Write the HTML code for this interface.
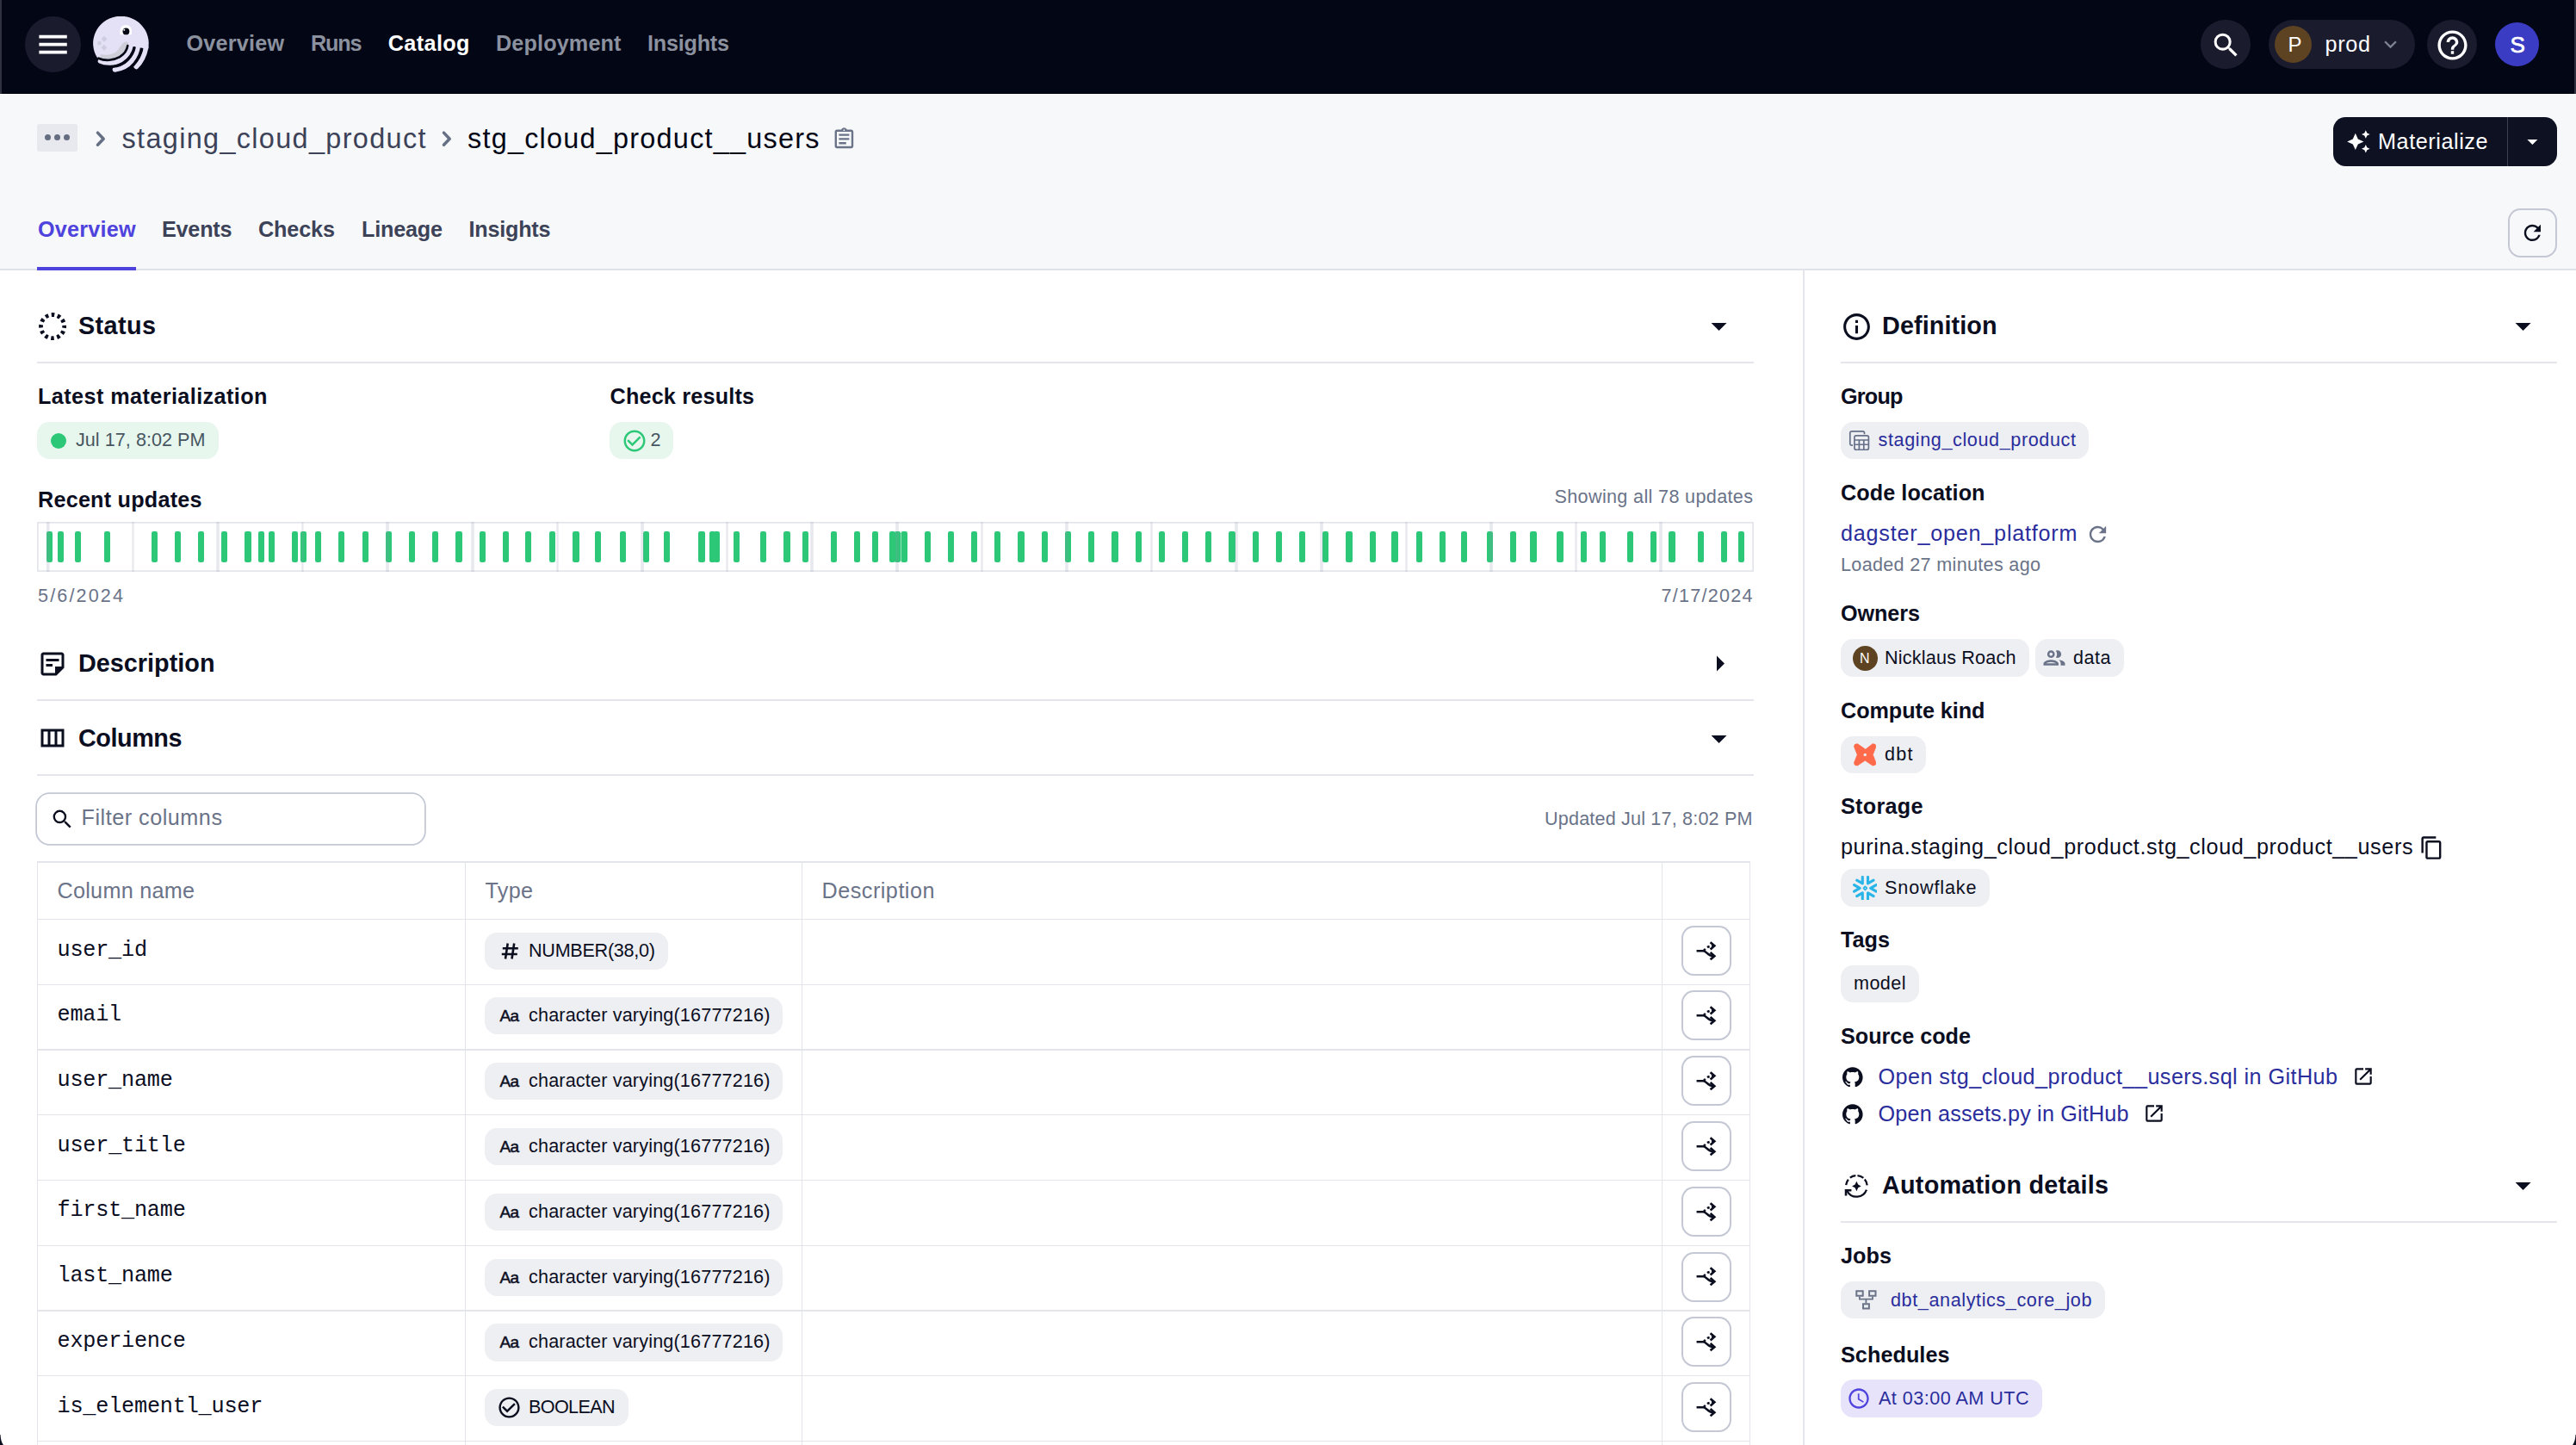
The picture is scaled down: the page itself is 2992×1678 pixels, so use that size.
<!DOCTYPE html><html lang="en"><head><meta charset="utf-8"><title>stg_cloud_product__users</title><style>html,body{margin:0;padding:0;overflow:hidden}body{width:2992px;height:1678px;background:#fff}#page{position:relative;width:2992px;height:1678px;overflow:hidden;transform-origin:0 0;background:#fff;font-family:"Liberation Sans",sans-serif}
.b{position:absolute;display:block}.t{position:absolute;white-space:nowrap;line-height:1;font-family:"Liberation Sans",sans-serif}
.m{font-family:"Liberation Mono",monospace}</style></head><body><div id="page">
<nav>
<div class="b" style="left:0px;top:0px;width:2992px;height:108.9px;background:#030615;"></div>
<div class="b" style="left:0px;top:0px;width:2px;height:108.9px;background:#2f3140;"></div>
<div class="b" style="left:2990px;top:0px;width:2px;height:108.9px;background:#2f3140;"></div>
<div class="b" style="left:29px;top:19px;width:65px;height:65px;background:#1a1c2e;border-radius:33px;"></div>
<svg class="b" style="left:39.9px;top:30.1px" width="43.2" height="43.2" viewBox="0 0 24 24"><path fill="#ffffff" d="M3 18h18v-2H3v2zm0-5h18v-2H3v2zm0-7v2h18V6H3z"/></svg>
<div class="b" style="left:2556px;top:23px;width:57.5px;height:57px;background:#1a1c2e;border-radius:29px;"></div>
<svg class="b" style="left:2567.0px;top:34.0px" width="37" height="37" viewBox="0 0 24 24"><path fill="#ffffff" d="M15.5 14h-.79l-.28-.27A6.471 6.471 0 0016 9.5 6.5 6.5 0 109.5 16c1.61 0 3.09-.59 4.23-1.57l.27.28v.79l5 4.99L20.49 19l-4.99-5zm-6 0C7.01 14 5 11.99 5 9.5S7.01 5 9.5 5 14 7.01 14 9.5 11.99 14 9.5 14z"/></svg>
<div class="b" style="left:2635px;top:23px;width:170px;height:57px;background:#1a1c2e;border-radius:29px;"></div>
<div class="b" style="left:2642px;top:30px;width:43px;height:43px;background:#5e4322;border-radius:22px;"></div>
<svg class="b" style="left:2761.5px;top:37.0px" width="29" height="29" viewBox="0 0 24 24"><path fill="#7d8392" d="M16.59 8.59L12 13.17 7.41 8.59 6 10l6 6 6-6z"/></svg>
<div class="b" style="left:2819px;top:23px;width:57.5px;height:57px;background:#1a1c2e;border-radius:29px;"></div>
<svg class="b" style="left:2827.5px;top:31.5px" width="41" height="41" viewBox="0 0 24 24"><path fill="#ffffff" d="M11 18h2v-2h-2v2zm1-16C6.48 2 2 6.48 2 12s4.48 10 10 10 10-4.48 10-10S17.52 2 12 2zm0 18c-4.41 0-8-3.59-8-8s3.59-8 8-8 8 3.59 8 8-3.59 8-8 8zm0-14c-2.21 0-4 1.79-4 4h2c0-1.1.9-2 2-2s2 .9 2 2c0 2-3 1.75-3 5h2c0-2.25 3-2.5 3-5 0-2.21-1.79-4-4-4z"/></svg>
<div class="b" style="left:2898px;top:26px;width:51px;height:51px;background:#3b3cc4;border-radius:26px;"></div>
<svg class="b" style="left:108px;top:19px" width="65" height="65" viewBox="0 0 65 65"><g fill="none" stroke="#e4e1f6" stroke-linecap="round"><path d="M8.5 52C15 55 25 54.800 32.500 50.500C38.500 47 42.500 42 44.300 33" stroke-width="5.600"/><path d="M25.500 61.800C33 61 40 57.500 44.500 52C48.500 47 51.500 42 52.300 34" stroke-width="5.800"/><path d="M50.300 58.300C55.500 53.500 59.500 46.500 61.600 36" stroke-width="5.800"/></g>
<path d="M5.200 48.350A32.300 31.600 0 1 1 64 38L40.300 34C39.500 39.500 36.500 44 31 47.500C24 51.500 14 52.500 6.500 49Z" fill="#e4e1f6"/>
<path d="M9 44C16 46 24.600 44 28 40C31.500 36 34 30.500 38 29.500C40 29 41.500 30.500 41 33.500L40.300 34C39.500 39.500 36.500 44 31 47.500C24 51.500 14 52.500 8 49.500Z" fill="#cdced8"/>
<g fill="none" stroke="#030615" stroke-width="2.600" stroke-linecap="round"><path d="M6.500 48.700C14 52.200 24 51.200 31 47.200C36.500 43.700 39.500 39.500 40.300 34"/><path d="M22 58.600C30 58.300 36 55 40.500 50.500C44.500 46.500 47.500 41.500 48.400 36.300"/><path d="M47.300 56.500C52 51 55.500 45 57 38"/></g>
<path d="M31.500 21.200V16.600A6.700 6.700 0 0 1 44.900 16.600V21.200Z" fill="#ffffff"/><circle cx="38.400" cy="17.400" r="3.900" fill="#030615"/><circle cx="36.300" cy="15.700" r="1" fill="#ffffff"/>
<g fill="#cfcde0"><rect x="10.400" y="23.700" width="5" height="5" transform="rotate(45 12.900 26.200)"/><rect x="5.300" y="29" width="4.300" height="4.300" rx="1"/><rect x="10.400" y="33.800" width="5" height="5" transform="rotate(45 12.900 36.300)"/></g></svg>
<span class="t" style="left:216.5px;top:38px;font-size:25.2px;color:#8b919e;font-weight:700;letter-spacing:0.212px;">Overview</span>
<span class="t" style="left:361px;top:38px;font-size:25.2px;color:#8b919e;font-weight:700;letter-spacing:-1.156px;">Runs</span>
<span class="t" style="left:450.75px;top:38px;font-size:25.2px;color:#ffffff;font-weight:700;letter-spacing:0.396px;">Catalog</span>
<span class="t" style="left:576px;top:38px;font-size:25.2px;color:#8b919e;font-weight:700;letter-spacing:0.149px;">Deployment</span>
<span class="t" style="left:752px;top:38px;font-size:25.2px;color:#8b919e;font-weight:700;letter-spacing:-0.223px;">Insights</span>
<span class="t" style="left:2657.5px;top:40px;font-size:24px;color:#ffffff;">P</span>
<span class="t" style="left:2700.5px;top:39px;font-size:25.2px;color:#ffffff;letter-spacing:0.693px;">prod</span>
<span class="t" style="left:2915.5px;top:39px;font-size:26px;color:#ffffff;-webkit-text-stroke:0.7px #ffffff;">S</span>
</nav>
<header>
<div class="b" style="left:0px;top:110.3px;width:2992px;height:202px;background:#f7f8fa;"></div>
<div class="b" style="left:0px;top:311.5px;width:2992px;height:2px;background:#e0e2e9;"></div>
<div class="b" style="left:43px;top:310px;width:115px;height:4px;background:#4f43dd;"></div>
<div class="b" style="left:43px;top:144px;width:46.9px;height:32px;background:#e8e9ee;border-radius:2.5px;"></div>
<div class="b" style="left:51.9px;top:156px;width:7.2px;height:7.2px;background:#656d80;border-radius:4px;"></div>
<div class="b" style="left:62.800000000000004px;top:156px;width:7.2px;height:7.2px;background:#656d80;border-radius:4px;"></div>
<div class="b" style="left:73.80000000000001px;top:156px;width:7.2px;height:7.2px;background:#656d80;border-radius:4px;"></div>
<svg class="b" style="left:108px;top:150px" width="16" height="22" viewBox="108 150 16 22"><path d="M113.450 154.150L120.200 161.200L113.450 168.250" fill="none" stroke="#667085" stroke-width="3.500" stroke-linecap="round" stroke-linejoin="round"/></svg>
<svg class="b" style="left:509.5px;top:150px" width="16" height="22" viewBox="108 150 16 22"><path d="M113.450 154.150L120.200 161.200L113.450 168.250" fill="none" stroke="#667085" stroke-width="3.500" stroke-linecap="round" stroke-linejoin="round"/></svg>
<svg class="b" style="left:966.1px;top:147.0px" width="28.8" height="28.8" viewBox="0 0 24 24"><path fill="#6a7388" d="M7 15h7v2H7zm0-4h10v2H7zm0-4h10v2H7zm12-4h-4.18C14.4 1.84 13.3 1 12 1c-1.3 0-2.4.84-2.82 2H5c-1.1 0-2 .9-2 2v14c0 1.1.9 2 2 2h14c1.1 0 2-.9 2-2V5c0-1.1-.9-2-2-2zm-7-.25c.41 0 .75.34.75.75s-.34.75-.75.75-.75-.34-.75-.75.34-.75.75-.75zM19 19H5V5h14v14z"/></svg>
<div class="b" style="left:2710px;top:136px;width:260px;height:57px;background:#0e1122;border-radius:14.4px;"></div>
<div class="b" style="left:2911.5px;top:136px;width:1.8px;height:57px;background:#3e4152;"></div>
<svg class="b" style="left:2725.1px;top:150.1px" width="28.8" height="28.8" viewBox="0 0 24 24"><path fill="#ffffff" d="M19 9l1.25-2.75L23 5l-2.75-1.25L19 1l-1.25 2.75L15 5l2.75 1.25L19 9zm-7.5.5L9 4 6.5 9.5 1 12l5.500 2.5L9 20l2.5-5.5L17 12l-5.5-2.500zM19 15l-1.25 2.75L15 19l2.75 1.250L19 23l1.25-2.75L23 19l-2.75-1.25L19 15z"/></svg>
<svg class="b" style="left:2927.1px;top:150.4px" width="28.8" height="28.8" viewBox="0 0 24 24"><path fill="#ffffff" d="M7 10l5 5 5-5z"/></svg>
<div class="b" style="left:2913px;top:242px;width:57px;height:57px;background:#f7f8fa;border-radius:14.4px;box-shadow:inset 0 0 0 2px #c4c8d4;"></div>
<svg class="b" style="left:2927.3px;top:256.1px" width="28.8" height="28.8" viewBox="0 0 24 24"><path fill="#0b0e1f" d="M17.65 6.35A7.958 7.958 0 0012 4c-4.42 0-7.99 3.58-7.99 8s3.57 8 7.99 8c3.73 0 6.84-2.55 7.73-6h-2.08A5.99 5.99 0 0112 18c-3.31 0-6-2.69-6-6s2.69-6 6-6c1.66 0 3.14.69 4.22 1.78L13 11h7V4l-2.35 2.35z"/></svg>
<span class="t" style="left:141.5px;top:145px;font-size:32.4px;color:#3c4257;letter-spacing:1.352px;">staging_cloud_product</span>
<span class="t" style="left:543px;top:145px;font-size:32.4px;color:#030615;letter-spacing:1.241px;">stg_cloud_product__users</span>
<span class="t" style="left:44px;top:254px;font-size:25.2px;color:#4f43dd;font-weight:700;letter-spacing:0.212px;">Overview</span>
<span class="t" style="left:188px;top:254px;font-size:25.2px;color:#3c4257;font-weight:700;letter-spacing:-0.222px;">Events</span>
<span class="t" style="left:300px;top:254px;font-size:25.2px;color:#3c4257;font-weight:700;letter-spacing:-0.122px;">Checks</span>
<span class="t" style="left:420px;top:254px;font-size:25.2px;color:#3c4257;font-weight:700;letter-spacing:-0.198px;">Lineage</span>
<span class="t" style="left:544.5px;top:254px;font-size:25.2px;color:#3c4257;font-weight:700;letter-spacing:-0.223px;">Insights</span>
<span class="t" style="left:2762px;top:152px;font-size:25.2px;color:#ffffff;letter-spacing:0.572px;">Materialize</span>
</header>
<main>
<div class="b" style="left:43px;top:420px;width:1994px;height:2px;background:#e4e6ec;"></div>
<div class="b" style="left:43px;top:812px;width:1994px;height:2px;background:#e4e6ec;"></div>
<div class="b" style="left:43px;top:899px;width:1994px;height:2px;background:#e4e6ec;"></div>
<svg class="b" style="left:44.9px;top:362.8px" width="32.2" height="32.2" viewBox="0 0 32.2 32.2"><circle cx="16.100" cy="16.100" r="13.600" fill="none" stroke="#0b0e1f" stroke-width="4.800" stroke-dasharray="3.600 3.521" stroke-dashoffset="1.800"/></svg>
<svg class="b" style="left:1975.4px;top:357.4px" width="43.2" height="43.2" viewBox="0 0 24 24"><path fill="#0b0e1f" d="M7 10l5 5 5-5z"/></svg>
<svg class="b" style="left:1975.9px;top:749.4px" width="43.2" height="43.2" viewBox="0 0 24 24"><path fill="#0b0e1f" d="M10 17l5-5-5-5v10z"/></svg>
<svg class="b" style="left:1975.4px;top:835.9px" width="43.2" height="43.2" viewBox="0 0 24 24"><path fill="#0b0e1f" d="M7 10l5 5 5-5z"/></svg>
<svg class="b" style="left:43.0px;top:752.75px" width="36" height="36" viewBox="0 0 24 24"><path fill="#0b0e1f" d="M19 5v9h-5v5H5V5h14m0-2H5c-1.1 0-2 .9-2 2v14c0 1.1.9 2 2 2h10l6-6V5c0-1.1-.9-2-2-2zm-7 11H7v-2h5v2zm5-4H7V8h10v2z"/></svg>
<svg class="b" style="left:43.0px;top:839.0px" width="36" height="36" viewBox="0 0 24 24"><path fill="#0b0e1f" d="M3 5v14h18V5H3zm5.33 12H5V7h3.33v10zm5.34 0h-3.33V7h3.33v10zM19 17h-3.33V7H19v10z"/></svg>
<div class="b" style="left:43px;top:490px;width:211px;height:43px;background:#e7f7ee;border-radius:14.4px;"></div>
<div class="b" style="left:59px;top:503px;width:18px;height:18px;background:#2cc878;border-radius:9px;"></div>
<div class="b" style="left:708px;top:490px;width:74px;height:43px;background:#e7f7ee;border-radius:14.4px;"></div>
<svg class="b" style="left:721.5px;top:496.5px" width="30" height="30" viewBox="0 0 24 24"><path fill="#2cc878" d="M16.59 7.58L10 14.17l-3.59-3.58L5 12l5 5 8-8zM12 2C6.48 2 2 6.48 2 12s4.48 10 10 10 10-4.48 10-10S17.52 2 12 2zm0 18c-4.42 0-8-3.58-8-8s3.58-8 8-8 8 3.58 8 8-3.58 8-8 8z"/></svg>
<div class="b" style="left:43px;top:606px;width:1994px;height:58px;box-shadow:inset 0 0 0 1.8px #e4e6ec;"></div>
<svg class="b" style="left:43px;top:606px" width="1994" height="58" viewBox="0 0 1994 58"><g fill="#2cc878"><rect x="11" y="11" width="7" height="36" rx="2.2"/><rect x="24" y="11" width="7" height="36" rx="2.2"/><rect x="44" y="11" width="7" height="36" rx="2.2"/><rect x="78" y="11" width="7" height="36" rx="2.2"/><rect x="133" y="11" width="7" height="36" rx="2.2"/><rect x="160" y="11" width="7" height="36" rx="2.2"/><rect x="187" y="11" width="7" height="36" rx="2.2"/><rect x="214" y="11" width="7" height="36" rx="2.2"/><rect x="241" y="11" width="8" height="36" rx="2.2"/><rect x="257" y="11" width="7" height="36" rx="2.2"/><rect x="269" y="11" width="7" height="36" rx="2.2"/><rect x="296" y="11" width="7" height="36" rx="2.2"/><rect x="306" y="11" width="7" height="36" rx="2.2"/><rect x="323" y="11" width="7" height="36" rx="2.2"/><rect x="350" y="11" width="7" height="36" rx="2.2"/><rect x="378" y="11" width="7" height="36" rx="2.2"/><rect x="405" y="11" width="7" height="36" rx="2.2"/><rect x="432" y="11" width="7" height="36" rx="2.2"/><rect x="459" y="11" width="7" height="36" rx="2.2"/><rect x="486" y="11" width="8" height="36" rx="2.2"/><rect x="514" y="11" width="7" height="36" rx="2.2"/><rect x="541" y="11" width="7" height="36" rx="2.2"/><rect x="567" y="11" width="7" height="36" rx="2.2"/><rect x="595" y="11" width="7" height="36" rx="2.2"/><rect x="622" y="11" width="8" height="36" rx="2.2"/><rect x="648" y="11" width="7" height="36" rx="2.2"/><rect x="677" y="11" width="7" height="36" rx="2.2"/><rect x="704" y="11" width="7" height="36" rx="2.2"/><rect x="728" y="11" width="7" height="36" rx="2.2"/><rect x="768" y="11" width="8" height="36" rx="2.2"/><rect x="781" y="11" width="7" height="36" rx="2.2"/><rect x="786" y="11" width="7" height="36" rx="2.2"/><rect x="809" y="11" width="7" height="36" rx="2.2"/><rect x="840" y="11" width="7" height="36" rx="2.2"/><rect x="867" y="11" width="8" height="36" rx="2.2"/><rect x="889" y="11" width="7" height="36" rx="2.2"/><rect x="922" y="11" width="7" height="36" rx="2.2"/><rect x="949" y="11" width="7" height="36" rx="2.2"/><rect x="970" y="11" width="7" height="36" rx="2.2"/><rect x="990" y="11" width="7" height="36" rx="2.2"/><rect x="996" y="11" width="7" height="36" rx="2.2"/><rect x="1003.5" y="11" width="7.5" height="36" rx="2.2"/><rect x="1031" y="11" width="7" height="36" rx="2.2"/><rect x="1058" y="11" width="7" height="36" rx="2.2"/><rect x="1085" y="11" width="7" height="36" rx="2.2"/><rect x="1112" y="11" width="7" height="36" rx="2.2"/><rect x="1139" y="11" width="8" height="36" rx="2.2"/><rect x="1167" y="11" width="7" height="36" rx="2.2"/><rect x="1194" y="11" width="7" height="36" rx="2.2"/><rect x="1221" y="11" width="7" height="36" rx="2.2"/><rect x="1248" y="11" width="8" height="36" rx="2.2"/><rect x="1276" y="11" width="7" height="36" rx="2.2"/><rect x="1303" y="11" width="7" height="36" rx="2.2"/><rect x="1330" y="11" width="7" height="36" rx="2.2"/><rect x="1357" y="11" width="7" height="36" rx="2.2"/><rect x="1384" y="11" width="8" height="36" rx="2.2"/><rect x="1412" y="11" width="7" height="36" rx="2.2"/><rect x="1439" y="11" width="7" height="36" rx="2.2"/><rect x="1466" y="11" width="7" height="36" rx="2.2"/><rect x="1493" y="11" width="7" height="36" rx="2.2"/><rect x="1520" y="11" width="8" height="36" rx="2.2"/><rect x="1548" y="11" width="7" height="36" rx="2.2"/><rect x="1573" y="11" width="8" height="36" rx="2.2"/><rect x="1602" y="11" width="7" height="36" rx="2.2"/><rect x="1629" y="11" width="7" height="36" rx="2.2"/><rect x="1654" y="11" width="7" height="36" rx="2.2"/><rect x="1684" y="11" width="7" height="36" rx="2.2"/><rect x="1711" y="11" width="7" height="36" rx="2.2"/><rect x="1734" y="11" width="8" height="36" rx="2.2"/><rect x="1765" y="11" width="8" height="36" rx="2.2"/><rect x="1793" y="11" width="7" height="36" rx="2.2"/><rect x="1815" y="11" width="7" height="36" rx="2.2"/><rect x="1847" y="11" width="7" height="36" rx="2.2"/><rect x="1874" y="11" width="7" height="36" rx="2.2"/><rect x="1895" y="11" width="8" height="36" rx="2.2"/><rect x="1929" y="11" width="7" height="36" rx="2.2"/><rect x="1956" y="11" width="7" height="36" rx="2.2"/><rect x="1976" y="11" width="7" height="36" rx="2.2"/></g><g fill="#9196ae" fill-opacity="0.21"><rect x="10.95" y="0" width="3.6" height="58"/><rect x="110.35" y="0" width="2.3" height="58"/><rect x="208.2" y="0" width="3.6" height="58"/><rect x="307.25" y="0" width="2.3" height="58"/><rect x="405.2" y="0" width="3.6" height="58"/><rect x="504.2" y="0" width="3.6" height="58"/><rect x="603.35" y="0" width="2.3" height="58"/><rect x="701.2" y="0" width="3.6" height="58"/><rect x="800.35" y="0" width="2.3" height="58"/><rect x="898.2" y="0" width="3.6" height="58"/><rect x="997.2" y="0" width="3.6" height="58"/><rect x="1096.35" y="0" width="2.3" height="58"/><rect x="1194.2" y="0" width="3.6" height="58"/><rect x="1293.35" y="0" width="2.3" height="58"/><rect x="1391.2" y="0" width="3.6" height="58"/><rect x="1490.2" y="0" width="3.6" height="58"/><rect x="1589.35" y="0" width="2.3" height="58"/><rect x="1687.2" y="0" width="3.6" height="58"/><rect x="1786.35" y="0" width="2.3" height="58"/><rect x="1884.2" y="0" width="3.6" height="58"/></g></svg>
<div class="b" style="left:43.2px;top:922.3px;width:450px;height:57.6px;background:#fff;border-radius:14.4px;box-shadow:0 0 0 1.8px #c4c8d4;"></div>
<svg class="b" style="left:57.9px;top:937.4px" width="28.8" height="28.8" viewBox="0 0 24 24"><path fill="#0b0e1f" d="M15.5 14h-.79l-.28-.27A6.471 6.471 0 0016 9.5 6.5 6.5 0 109.5 16c1.61 0 3.09-.59 4.23-1.57l.27.28v.79l5 4.99L20.49 19l-4.99-5zm-6 0C7.01 14 5 11.99 5 9.5S7.01 5 9.5 5 14 7.01 14 9.5 11.99 14 9.5 14z"/></svg>
<div class="b" style="left:43px;top:1000.4px;width:1990px;height:1.3px;background:#e3e5eb;"></div>
<div class="b" style="left:43px;top:1066.95px;width:1990px;height:1.3px;background:#e3e5eb;"></div>
<div class="b" style="left:43px;top:1142.7px;width:1990px;height:1.3px;background:#e3e5eb;"></div>
<div class="b" style="left:43px;top:1218.45px;width:1990px;height:1.3px;background:#e3e5eb;"></div>
<div class="b" style="left:43px;top:1294.2px;width:1990px;height:1.3px;background:#e3e5eb;"></div>
<div class="b" style="left:43px;top:1369.95px;width:1990px;height:1.3px;background:#e3e5eb;"></div>
<div class="b" style="left:43px;top:1445.7px;width:1990px;height:1.3px;background:#e3e5eb;"></div>
<div class="b" style="left:43px;top:1521.45px;width:1990px;height:1.3px;background:#e3e5eb;"></div>
<div class="b" style="left:43px;top:1597.2px;width:1990px;height:1.3px;background:#e3e5eb;"></div>
<div class="b" style="left:43px;top:1672.95px;width:1990px;height:1.3px;background:#e3e5eb;"></div>
<div class="b" style="left:43.1px;top:1000.4px;width:1.3px;height:677.6px;background:#e3e5eb;"></div>
<div class="b" style="left:539.85px;top:1000.4px;width:1.3px;height:677.6px;background:#e3e5eb;"></div>
<div class="b" style="left:930.6px;top:1000.4px;width:1.3px;height:677.6px;background:#e3e5eb;"></div>
<div class="b" style="left:1929.85px;top:1000.4px;width:1.3px;height:677.6px;background:#e3e5eb;"></div>
<div class="b" style="left:2031.75px;top:1000.4px;width:1.3px;height:677.6px;background:#e3e5eb;"></div>
<div class="b" style="left:563px;top:1083px;width:213px;height:43.2px;background:#eeeff2;border-radius:14.4px;"></div>
<svg class="b" style="left:580px;top:1093px" width="24" height="24" viewBox="0 0 24 24"><path d="M9.700 2.500L7 20.500M17.200 2.500L14.500 20.500M3.800 8.300h18M2.800 15h18" fill="none" stroke="#0b0e1f" stroke-width="2.600"/></svg>
<div class="b" style="left:1953px;top:1075px;width:58px;height:58px;background:#fff;border-radius:14.4px;box-shadow:inset 0 0 0 2px #c4c8d4;"></div>
<svg class="b" style="left:1967px;top:1089.6px" width="28.5" height="28.5" viewBox="0 0 24 24"><path d="M3 12h6.5c3.500 0 4 5 10 5" fill="none" stroke="#0b0e1f" stroke-width="2.2"/>
<path d="M16.500 13.500l4 3.500-4 3.500" fill="none" stroke="#0b0e1f" stroke-width="2.200"/>
<path d="M10 11.500c2-1 3-4.500 9.500-4.500" fill="none" stroke="#0b0e1f" stroke-width="2.200" stroke-dasharray="2.400 2.200"/>
<path d="M16.500 3.500l4 3.500-4 3.500" fill="none" stroke="#0b0e1f" stroke-width="2.200"/></svg>
<div class="b" style="left:563px;top:1158.2px;width:346px;height:43.2px;background:#eeeff2;border-radius:14.4px;"></div>
<div class="b" style="left:1953px;top:1150.2px;width:58px;height:58px;background:#fff;border-radius:14.4px;box-shadow:inset 0 0 0 2px #c4c8d4;"></div>
<svg class="b" style="left:1967px;top:1164.8px" width="28.5" height="28.5" viewBox="0 0 24 24"><path d="M3 12h6.5c3.500 0 4 5 10 5" fill="none" stroke="#0b0e1f" stroke-width="2.2"/>
<path d="M16.500 13.500l4 3.500-4 3.500" fill="none" stroke="#0b0e1f" stroke-width="2.200"/>
<path d="M10 11.500c2-1 3-4.500 9.500-4.500" fill="none" stroke="#0b0e1f" stroke-width="2.200" stroke-dasharray="2.400 2.200"/>
<path d="M16.500 3.500l4 3.500-4 3.500" fill="none" stroke="#0b0e1f" stroke-width="2.200"/></svg>
<div class="b" style="left:563px;top:1234px;width:346px;height:43.2px;background:#eeeff2;border-radius:14.4px;"></div>
<div class="b" style="left:1953px;top:1226px;width:58px;height:58px;background:#fff;border-radius:14.4px;box-shadow:inset 0 0 0 2px #c4c8d4;"></div>
<svg class="b" style="left:1967px;top:1240.6px" width="28.5" height="28.5" viewBox="0 0 24 24"><path d="M3 12h6.5c3.500 0 4 5 10 5" fill="none" stroke="#0b0e1f" stroke-width="2.2"/>
<path d="M16.500 13.500l4 3.500-4 3.500" fill="none" stroke="#0b0e1f" stroke-width="2.200"/>
<path d="M10 11.500c2-1 3-4.500 9.500-4.500" fill="none" stroke="#0b0e1f" stroke-width="2.200" stroke-dasharray="2.400 2.200"/>
<path d="M16.500 3.500l4 3.500-4 3.500" fill="none" stroke="#0b0e1f" stroke-width="2.200"/></svg>
<div class="b" style="left:563px;top:1310px;width:346px;height:43.2px;background:#eeeff2;border-radius:14.4px;"></div>
<div class="b" style="left:1953px;top:1302px;width:58px;height:58px;background:#fff;border-radius:14.4px;box-shadow:inset 0 0 0 2px #c4c8d4;"></div>
<svg class="b" style="left:1967px;top:1316.6px" width="28.5" height="28.5" viewBox="0 0 24 24"><path d="M3 12h6.5c3.500 0 4 5 10 5" fill="none" stroke="#0b0e1f" stroke-width="2.2"/>
<path d="M16.500 13.500l4 3.500-4 3.500" fill="none" stroke="#0b0e1f" stroke-width="2.200"/>
<path d="M10 11.500c2-1 3-4.500 9.500-4.500" fill="none" stroke="#0b0e1f" stroke-width="2.200" stroke-dasharray="2.400 2.200"/>
<path d="M16.500 3.500l4 3.500-4 3.500" fill="none" stroke="#0b0e1f" stroke-width="2.200"/></svg>
<div class="b" style="left:563px;top:1386px;width:346px;height:43.2px;background:#eeeff2;border-radius:14.4px;"></div>
<div class="b" style="left:1953px;top:1378px;width:58px;height:58px;background:#fff;border-radius:14.4px;box-shadow:inset 0 0 0 2px #c4c8d4;"></div>
<svg class="b" style="left:1967px;top:1392.6px" width="28.5" height="28.5" viewBox="0 0 24 24"><path d="M3 12h6.5c3.500 0 4 5 10 5" fill="none" stroke="#0b0e1f" stroke-width="2.2"/>
<path d="M16.500 13.500l4 3.500-4 3.500" fill="none" stroke="#0b0e1f" stroke-width="2.200"/>
<path d="M10 11.500c2-1 3-4.500 9.500-4.500" fill="none" stroke="#0b0e1f" stroke-width="2.200" stroke-dasharray="2.400 2.200"/>
<path d="M16.500 3.500l4 3.500-4 3.500" fill="none" stroke="#0b0e1f" stroke-width="2.200"/></svg>
<div class="b" style="left:563px;top:1461.7px;width:346px;height:43.2px;background:#eeeff2;border-radius:14.4px;"></div>
<div class="b" style="left:1953px;top:1453.7px;width:58px;height:58px;background:#fff;border-radius:14.4px;box-shadow:inset 0 0 0 2px #c4c8d4;"></div>
<svg class="b" style="left:1967px;top:1468.3px" width="28.5" height="28.5" viewBox="0 0 24 24"><path d="M3 12h6.5c3.500 0 4 5 10 5" fill="none" stroke="#0b0e1f" stroke-width="2.2"/>
<path d="M16.500 13.500l4 3.500-4 3.500" fill="none" stroke="#0b0e1f" stroke-width="2.200"/>
<path d="M10 11.500c2-1 3-4.500 9.500-4.500" fill="none" stroke="#0b0e1f" stroke-width="2.200" stroke-dasharray="2.400 2.200"/>
<path d="M16.500 3.500l4 3.500-4 3.500" fill="none" stroke="#0b0e1f" stroke-width="2.200"/></svg>
<div class="b" style="left:563px;top:1537.4px;width:346px;height:43.2px;background:#eeeff2;border-radius:14.4px;"></div>
<div class="b" style="left:1953px;top:1529.4px;width:58px;height:58px;background:#fff;border-radius:14.4px;box-shadow:inset 0 0 0 2px #c4c8d4;"></div>
<svg class="b" style="left:1967px;top:1544.0px" width="28.5" height="28.5" viewBox="0 0 24 24"><path d="M3 12h6.5c3.500 0 4 5 10 5" fill="none" stroke="#0b0e1f" stroke-width="2.2"/>
<path d="M16.500 13.500l4 3.500-4 3.500" fill="none" stroke="#0b0e1f" stroke-width="2.200"/>
<path d="M10 11.500c2-1 3-4.500 9.500-4.500" fill="none" stroke="#0b0e1f" stroke-width="2.200" stroke-dasharray="2.400 2.200"/>
<path d="M16.500 3.500l4 3.500-4 3.500" fill="none" stroke="#0b0e1f" stroke-width="2.200"/></svg>
<div class="b" style="left:563px;top:1613px;width:167px;height:43.2px;background:#eeeff2;border-radius:14.4px;"></div>
<svg class="b" style="left:577.0px;top:1620.1px" width="29" height="29" viewBox="0 0 24 24"><path fill="#0b0e1f" d="M16.59 7.58L10 14.17l-3.59-3.58L5 12l5 5 8-8zM12 2C6.48 2 2 6.48 2 12s4.48 10 10 10 10-4.48 10-10S17.52 2 12 2zm0 18c-4.42 0-8-3.58-8-8s3.58-8 8-8 8 3.58 8 8-3.58 8-8 8z"/></svg>
<div class="b" style="left:1953px;top:1605px;width:58px;height:58px;background:#fff;border-radius:14.4px;box-shadow:inset 0 0 0 2px #c4c8d4;"></div>
<svg class="b" style="left:1967px;top:1619.6px" width="28.5" height="28.5" viewBox="0 0 24 24"><path d="M3 12h6.5c3.500 0 4 5 10 5" fill="none" stroke="#0b0e1f" stroke-width="2.2"/>
<path d="M16.500 13.500l4 3.500-4 3.500" fill="none" stroke="#0b0e1f" stroke-width="2.200"/>
<path d="M10 11.500c2-1 3-4.500 9.500-4.500" fill="none" stroke="#0b0e1f" stroke-width="2.200" stroke-dasharray="2.400 2.200"/>
<path d="M16.500 3.500l4 3.500-4 3.500" fill="none" stroke="#0b0e1f" stroke-width="2.200"/></svg>
<svg class="b" style="left:0px;top:1665.5px" width="5" height="12.5" viewBox="0 0 5 12.5"><path d="M0 0H0.500C0.800 6 2 9.500 4.300 12.500H0z" fill="#0b0e1f"/></svg>
<span class="t" style="left:91px;top:364px;font-size:28.8px;color:#0b0e1f;font-weight:700;letter-spacing:0.397px;">Status</span>
<span class="t" style="left:91px;top:756px;font-size:28.8px;color:#0b0e1f;font-weight:700;letter-spacing:0.008px;">Description</span>
<span class="t" style="left:91px;top:843px;font-size:28.8px;color:#0b0e1f;font-weight:700;letter-spacing:-0.451px;">Columns</span>
<span class="t" style="left:44px;top:448px;font-size:25.2px;color:#0b0e1f;font-weight:700;letter-spacing:0.426px;">Latest materialization</span>
<span class="t" style="left:708.5px;top:448px;font-size:25.2px;color:#0b0e1f;font-weight:700;letter-spacing:0.191px;">Check results</span>
<span class="t" style="left:44px;top:568px;font-size:25.2px;color:#0b0e1f;font-weight:700;letter-spacing:0.226px;">Recent updates</span>
<span class="t" style="left:88px;top:500px;font-size:21.6px;color:#475661;letter-spacing:0.032px;">Jul 17, 8:02 PM</span>
<span class="t" style="left:755.5px;top:500px;font-size:21.6px;color:#475661;">2</span>
<span class="t" style="left:1805.5px;top:566px;font-size:21.6px;color:#6a7388;letter-spacing:0.342px;">Showing all 78 updates</span>
<span class="t" style="left:44px;top:681px;font-size:21.6px;color:#6a7388;letter-spacing:2.134px;">5/6/2024</span>
<span class="t" style="left:1929.5px;top:681px;font-size:21.6px;color:#6a7388;letter-spacing:1.24px;">7/17/2024</span>
<span class="t" style="left:1794px;top:940px;font-size:21.6px;color:#6a7388;letter-spacing:0.173px;">Updated Jul 17, 8:02 PM</span>
<span class="t" style="left:94.5px;top:937px;font-size:25.2px;color:#6a7388;letter-spacing:0.518px;">Filter columns</span>
<span class="t" style="left:66.5px;top:1022px;font-size:25.2px;color:#6a7388;letter-spacing:0.27px;">Column name</span>
<span class="t" style="left:563.5px;top:1022px;font-size:25.2px;color:#6a7388;letter-spacing:0.297px;">Type</span>
<span class="t" style="left:954.5px;top:1022px;font-size:25.2px;color:#6a7388;letter-spacing:0.5px;">Description</span>
<span class="t m" style="left:66.5px;top:1091px;font-size:25.2px;color:#0b0e1f;letter-spacing:-0.217px;">user_id</span>
<span class="t" style="left:614px;top:1093px;font-size:21.6px;color:#0b0e1f;letter-spacing:-0.273px;">NUMBER(38,0)</span>
<span class="t m" style="left:66.5px;top:1166px;font-size:25.2px;color:#0b0e1f;letter-spacing:-0.232px;">email</span>
<span class="t" style="left:614px;top:1168px;font-size:21.6px;color:#0b0e1f;letter-spacing:0.169px;">character varying(16777216)</span>
<span class="t" style="left:580.5px;top:1170px;font-size:19px;color:#0b0e1f;-webkit-text-stroke:0.5px #0b0e1f;letter-spacing:-0.75px;">Aa</span>
<span class="t m" style="left:66.5px;top:1242px;font-size:25.2px;color:#0b0e1f;letter-spacing:-0.21px;">user_name</span>
<span class="t" style="left:614px;top:1244px;font-size:21.6px;color:#0b0e1f;letter-spacing:0.169px;">character varying(16777216)</span>
<span class="t" style="left:580.5px;top:1246px;font-size:19px;color:#0b0e1f;-webkit-text-stroke:0.5px #0b0e1f;letter-spacing:-0.75px;">Aa</span>
<span class="t m" style="left:66.5px;top:1318px;font-size:25.2px;color:#0b0e1f;letter-spacing:-0.206px;">user_title</span>
<span class="t" style="left:614px;top:1320px;font-size:21.6px;color:#0b0e1f;letter-spacing:0.169px;">character varying(16777216)</span>
<span class="t" style="left:580.5px;top:1322px;font-size:19px;color:#0b0e1f;-webkit-text-stroke:0.5px #0b0e1f;letter-spacing:-0.75px;">Aa</span>
<span class="t m" style="left:66.5px;top:1393px;font-size:25.2px;color:#0b0e1f;letter-spacing:-0.206px;">first_name</span>
<span class="t" style="left:614px;top:1396px;font-size:21.6px;color:#0b0e1f;letter-spacing:0.169px;">character varying(16777216)</span>
<span class="t" style="left:580.5px;top:1398px;font-size:19px;color:#0b0e1f;-webkit-text-stroke:0.5px #0b0e1f;letter-spacing:-0.75px;">Aa</span>
<span class="t m" style="left:66.5px;top:1469px;font-size:25.2px;color:#0b0e1f;letter-spacing:-0.21px;">last_name</span>
<span class="t" style="left:614px;top:1472px;font-size:21.6px;color:#0b0e1f;letter-spacing:0.169px;">character varying(16777216)</span>
<span class="t" style="left:580.5px;top:1474px;font-size:19px;color:#0b0e1f;-webkit-text-stroke:0.5px #0b0e1f;letter-spacing:-0.75px;">Aa</span>
<span class="t m" style="left:66.5px;top:1545px;font-size:25.2px;color:#0b0e1f;letter-spacing:-0.206px;">experience</span>
<span class="t" style="left:614px;top:1547px;font-size:21.6px;color:#0b0e1f;letter-spacing:0.169px;">character varying(16777216)</span>
<span class="t" style="left:580.5px;top:1549px;font-size:19px;color:#0b0e1f;-webkit-text-stroke:0.5px #0b0e1f;letter-spacing:-0.75px;">Aa</span>
<span class="t m" style="left:66.5px;top:1621px;font-size:25.2px;color:#0b0e1f;letter-spacing:-0.198px;">is_elementl_user</span>
<span class="t" style="left:614px;top:1623px;font-size:21.6px;color:#0b0e1f;letter-spacing:-0.651px;">BOOLEAN</span>
</main>
<aside>
<div class="b" style="left:2094px;top:313px;width:2px;height:1365px;background:#e4e6ec;"></div>
<div class="b" style="left:2138px;top:420px;width:832px;height:2px;background:#e4e6ec;"></div>
<div class="b" style="left:2138px;top:1418px;width:832px;height:2px;background:#e4e6ec;"></div>
<svg class="b" style="left:2909.4px;top:357.4px" width="43.2" height="43.2" viewBox="0 0 24 24"><path fill="#0b0e1f" d="M7 10l5 5 5-5z"/></svg>
<svg class="b" style="left:2909.4px;top:1355.4px" width="43.2" height="43.2" viewBox="0 0 24 24"><path fill="#0b0e1f" d="M7 10l5 5 5-5z"/></svg>
<svg class="b" style="left:2137.5px;top:360.5px" width="37" height="37" viewBox="0 0 24 24"><path fill="#0b0e1f" d="M11 7h2v2h-2zm0 4h2v6h-2zm1-9C6.48 2 2 6.48 2 12s4.48 10 10 10 10-4.48 10-10S17.52 2 12 2zm0 18c-4.41 0-8-3.59-8-8s3.59-8 8-8 8 3.59 8 8-3.59 8-8 8z"/></svg>
<svg class="b" style="left:2141.55px;top:1362.7px" width="28.8" height="28.8" viewBox="0 0 24 24"><path d="M1.81 10.93A10.25 10.25 0 0 1 4.03 5.55 M5.69 3.92A10.25 10.25 0 0 1 11.11 1.79 M12.89 1.79A10.25 10.25 0 0 1 18.59 4.15 M19.85 5.41A10.25 10.25 0 0 1 22.21 11.11" fill="none" stroke="#0b0e1f" stroke-width="1.900"/><path d="M21.63 15.51A10.25 10.25 0 0 1 2.95 16.81L2.300 16.700" fill="none" stroke="#0b0e1f" stroke-width="1.900"/><path d="M1.700 21.200V16.100H7" fill="none" stroke="#0b0e1f" stroke-width="2.160"/><path d="M12 7.200L13.500 10.500L16.400 12L13.500 13.500L12 16.800L10.500 13.500L7.600 12L10.500 10.500Z" fill="#0b0e1f"/></svg>
<div class="b" style="left:2138px;top:490px;width:288px;height:43px;background:#eeeff2;border-radius:14.4px;"></div>
<svg class="b" style="left:2146px;top:498px" width="28" height="28" viewBox="0 0 28 28"><g fill="none" stroke="#667089" stroke-width="1.700"><path d="M6 19.200H4.800a2 2 0 0 1-2-2V4.800a2 2 0 0 1 2-2H17.500a2 2 0 0 1 2 2V6.200"/><rect x="7.950" y="7.850" width="16.450" height="16.400" rx="2"/><path d="M7.950 13H24.400M7.950 18.250H24.400M13.400 13V24.250M18.800 13V24.250"/></g></svg>
<svg class="b" style="left:2421.5px;top:605.5px" width="29" height="29" viewBox="0 0 24 24"><path fill="#6a7388" d="M17.65 6.35A7.958 7.958 0 0012 4c-4.42 0-7.99 3.58-7.99 8s3.57 8 7.99 8c3.73 0 6.84-2.55 7.73-6h-2.08A5.99 5.99 0 0112 18c-3.31 0-6-2.69-6-6s2.69-6 6-6c1.66 0 3.14.69 4.22 1.78L13 11h7V4l-2.35 2.35z"/></svg>
<div class="b" style="left:2138px;top:742px;width:219px;height:43.5px;background:#eeeff2;border-radius:14.4px;"></div>
<div class="b" style="left:2152px;top:750px;width:29px;height:29px;background:#5e4322;border-radius:15px;"></div>
<div class="b" style="left:2364px;top:742px;width:103px;height:43.5px;background:#eeeff2;border-radius:14.4px;"></div>
<svg class="b" style="left:2370.5px;top:749.0px" width="30" height="30" viewBox="0 0 24 24"><path fill="#6a7388" d="M9 13.75c-2.34 0-7 1.17-7 3.5V19h14v-1.75c0-2.33-4.66-3.5-7-3.5zM4.34 17c.84-.58 2.87-1.25 4.66-1.25s3.82.67 4.66 1.25H4.34zM9 12c1.93 0 3.5-1.57 3.5-3.5S10.930 5 9 5 5.5 6.57 5.5 8.5 7.07 12 9 12zm0-5c.83 0 1.5.67 1.5 1.5S9.83 10 9 10s-1.500-.67-1.5-1.5S8.17 7 9 7zm7.04 6.81c1.16.84 1.96 1.96 1.96 3.44V19h4v-1.75c0-2.02-3.5-3.17-5.96-3.44zM15 12c1.93 0 3.5-1.57 3.5-3.5S16.93 5 15 5c-.54 0-1.04.13-1.5.35.63.89 1 1.98 1 3.15s-.37 2.26-1 3.15c.46.22.96.35 1.5.35z"/></svg>
<div class="b" style="left:2138px;top:855px;width:99px;height:43px;background:#eeeff2;border-radius:14.4px;"></div>
<svg class="b" style="left:2152.7px;top:863.2px" width="26.5" height="26.8" viewBox="0 0 100 100" preserveAspectRatio="none"><path d="M2 15Q2 2 17 3L52 27L83 3Q98 2 98 15L84 50L98 85Q98 98 83 97L50 75L17 97Q2 98 2 85L16 50Z" fill="#ff6a4b" stroke="#ff6a4b" stroke-width="3" stroke-linejoin="round"/><circle cx="50" cy="50" r="6.500" fill="#ecedf1"/></svg>
<svg class="b" style="left:2810.0px;top:970.0px" width="29" height="29" viewBox="0 0 24 24"><path fill="#0b0e1f" d="M16 1H4c-1.1 0-2 .9-2 2v14h2V3h12V1zm3 4H8c-1.1 0-2 .9-2 2v14c0 1.1.9 2 2 2h11c1.1 0 2-.9 2-2V7c0-1.1-.9-2-2-2zm0 16H8V7h11v14z"/></svg>
<div class="b" style="left:2138px;top:1009px;width:173px;height:44px;background:#eeeff2;border-radius:14.4px;"></div>
<svg class="b" style="left:2151.6px;top:1016.6px" width="28.8" height="28.8" viewBox="-14.4 -14.4 28.8 28.8"><g fill="none" stroke="#29b5e8" stroke-width="3.100" stroke-linecap="round" stroke-linejoin="round"><path transform="rotate(0)" d="M-12.800 -3.800L-6.300 0L-12.800 3.800"/><path transform="rotate(60)" d="M-12.800 -3.800L-6.300 0L-12.800 3.800"/><path transform="rotate(120)" d="M-12.800 -3.800L-6.300 0L-12.800 3.800"/><path transform="rotate(180)" d="M-12.800 -3.800L-6.300 0L-12.800 3.800"/><path transform="rotate(240)" d="M-12.800 -3.800L-6.300 0L-12.800 3.800"/><path transform="rotate(300)" d="M-12.800 -3.800L-6.300 0L-12.800 3.800"/></g><path d="M0 -2L2 0L0 2L-2 0Z" fill="none" stroke="#29b5e8" stroke-width="1.700" stroke-linejoin="round"/></svg>
<div class="b" style="left:2138px;top:1121px;width:91px;height:43px;background:#eeeff2;border-radius:14.4px;"></div>
<svg class="b" style="left:2140.2px;top:1238.9px" width="23.6" height="23.6" viewBox="0 0 24 24"><path fill="#0b0e1f" d="M12 .297c-6.63 0-12 5.373-12 12 0 5.303 3.438 9.8 8.205 11.385.6.113.82-.258.82-.577 0-.285-.01-1.040-.015-2.04-3.338.724-4.042-1.61-4.042-1.61C4.422 18.07 3.633 17.7 3.633 17.7c-1.087-.744.084-.729.084-.729 1.205.084 1.838 1.236 1.838 1.236 1.070 1.835 2.809 1.305 3.495.998.108-.776.417-1.305.76-1.605-2.665-.3-5.466-1.332-5.466-5.930 0-1.31.465-2.38 1.235-3.22-.135-.303-.54-1.523.105-3.176 0 0 1.005-.322 3.3 1.230.96-.267 1.980-.399 3-.405 1.020.006 2.040.138 3 .405 2.28-1.552 3.285-1.230 3.285-1.230.645 1.653.240 2.873.12 3.176.765.840 1.230 1.910 1.230 3.220 0 4.610-2.805 5.625-5.475 5.920.42.360.81 1.096.81 2.220 0 1.606-.015 2.896-.015 3.286 0 .315.21.69.825.570C20.565 22.092 24 17.592 24 12.297c0-6.627-5.373-12-12-12"/></svg>
<svg class="b" style="left:2140.2px;top:1282.0px" width="23.6" height="23.6" viewBox="0 0 24 24"><path fill="#0b0e1f" d="M12 .297c-6.63 0-12 5.373-12 12 0 5.303 3.438 9.8 8.205 11.385.6.113.82-.258.82-.577 0-.285-.01-1.040-.015-2.04-3.338.724-4.042-1.61-4.042-1.61C4.422 18.07 3.633 17.7 3.633 17.7c-1.087-.744.084-.729.084-.729 1.205.084 1.838 1.236 1.838 1.236 1.070 1.835 2.809 1.305 3.495.998.108-.776.417-1.305.76-1.605-2.665-.3-5.466-1.332-5.466-5.930 0-1.31.465-2.38 1.235-3.22-.135-.303-.54-1.523.105-3.176 0 0 1.005-.322 3.3 1.230.96-.267 1.980-.399 3-.405 1.020.006 2.040.138 3 .405 2.28-1.552 3.285-1.230 3.285-1.230.645 1.653.240 2.873.12 3.176.765.840 1.230 1.910 1.230 3.220 0 4.610-2.805 5.625-5.475 5.920.42.360.81 1.096.81 2.220 0 1.606-.015 2.896-.015 3.286 0 .315.21.69.825.570C20.565 22.092 24 17.592 24 12.297c0-6.627-5.373-12-12-12"/></svg>
<svg class="b" style="left:2731.5px;top:1237.0px" width="26" height="26" viewBox="0 0 24 24"><path fill="#0b0e1f" d="M19 19H5V5h7V3H5a2 2 0 00-2 2v14a2 2 0 002 2h14c1.1 0 2-.9 2-2v-7h-2v7zM14 3v2h3.59l-9.83 9.83 1.41 1.41L19 6.41V10h2V3h-7z"/></svg>
<svg class="b" style="left:2488.5px;top:1279.5px" width="26" height="26" viewBox="0 0 24 24"><path fill="#0b0e1f" d="M19 19H5V5h7V3H5a2 2 0 00-2 2v14a2 2 0 002 2h14c1.1 0 2-.9 2-2v-7h-2v7zM14 3v2h3.59l-9.83 9.83 1.41 1.41L19 6.41V10h2V3h-7z"/></svg>
<div class="b" style="left:2138px;top:1488px;width:307px;height:43px;background:#eeeff2;border-radius:14.4px;"></div>
<svg class="b" style="left:2155px;top:1498px" width="25" height="23" viewBox="0 0 25 23"><g fill="none" stroke="#6a7388"><path d="M1.300 1.300h7.400v5.400h-7.400zM16.100 1.300h7.400v5.400h-7.400zM9 16.200h6.900v5.300H9z" stroke-width="2"/><path d="M4.900 7.700V10.600H20V7.700M12.400 10.600V15.200" stroke-width="1.800"/></g></svg>
<div class="b" style="left:2138px;top:1602px;width:234px;height:43.5px;background:#e6e3fb;border-radius:14.4px;"></div>
<svg class="b" style="left:2145.0px;top:1610.0px" width="28" height="28" viewBox="0 0 24 24"><path fill="#4f43dd" d="M11.99 2C6.47 2 2 6.48 2 12s4.47 10 9.99 10C17.52 22 22 17.52 22 12S17.52 2 11.99 2zM12 20c-4.42 0-8-3.58-8-8s3.58-8 8-8 8 3.58 8 8-3.58 8-8 8zm.5-13H11v6l5.25 3.15.75-1.23-4.5-2.67z"/></svg>
<svg class="b" style="left:2987px;top:1665.5px" width="5" height="12.5" viewBox="0 0 5 12.5"><path d="M5 0H4.500C4.200 6 3 9.500 0.700 12.500H5z" fill="#0b0e1f"/></svg>
<span class="t" style="left:2186px;top:364px;font-size:28.8px;color:#0b0e1f;font-weight:700;letter-spacing:0.082px;">Definition</span>
<span class="t" style="left:2186px;top:1362px;font-size:28.8px;color:#0b0e1f;font-weight:700;letter-spacing:0.224px;">Automation details</span>
<span class="t" style="left:2138px;top:448px;font-size:25.2px;color:#0b0e1f;font-weight:700;letter-spacing:-0.766px;">Group</span>
<span class="t" style="left:2138px;top:560px;font-size:25.2px;color:#0b0e1f;font-weight:700;letter-spacing:0.081px;">Code location</span>
<span class="t" style="left:2138px;top:700px;font-size:25.2px;color:#0b0e1f;font-weight:700;letter-spacing:-0.078px;">Owners</span>
<span class="t" style="left:2138px;top:813px;font-size:25.2px;color:#0b0e1f;font-weight:700;letter-spacing:-0.038px;">Compute kind</span>
<span class="t" style="left:2138px;top:924px;font-size:25.2px;color:#0b0e1f;font-weight:700;letter-spacing:0.286px;">Storage</span>
<span class="t" style="left:2138px;top:1079px;font-size:25.2px;color:#0b0e1f;font-weight:700;letter-spacing:0.026px;">Tags</span>
<span class="t" style="left:2138px;top:1191px;font-size:25.2px;color:#0b0e1f;font-weight:700;letter-spacing:-0.019px;">Source code</span>
<span class="t" style="left:2138px;top:1446px;font-size:25.2px;color:#0b0e1f;font-weight:700;letter-spacing:0.068px;">Jobs</span>
<span class="t" style="left:2138px;top:1561px;font-size:25.2px;color:#0b0e1f;font-weight:700;letter-spacing:0.062px;">Schedules</span>
<span class="t" style="left:2181.5px;top:500px;font-size:21.6px;color:#2a2d9c;letter-spacing:0.609px;">staging_cloud_product</span>
<span class="t" style="left:2138px;top:645px;font-size:21.6px;color:#6a7388;letter-spacing:0.314px;">Loaded 27 minutes ago</span>
<span class="t" style="left:2160px;top:757px;font-size:16px;color:#ffffff;">N</span>
<span class="t" style="left:2189px;top:753px;font-size:21.6px;color:#0b0e1f;letter-spacing:0.19px;">Nicklaus Roach</span>
<span class="t" style="left:2408px;top:753px;font-size:21.6px;color:#0b0e1f;letter-spacing:0.49px;">data</span>
<span class="t" style="left:2189px;top:865px;font-size:21.6px;color:#0b0e1f;letter-spacing:1.234px;">dbt</span>
<span class="t" style="left:2189px;top:1020px;font-size:21.6px;color:#0b0e1f;letter-spacing:0.857px;">Snowflake</span>
<span class="t" style="left:2153px;top:1131px;font-size:21.6px;color:#0b0e1f;letter-spacing:0.418px;">model</span>
<span class="t" style="left:2196px;top:1499px;font-size:21.6px;color:#2a2d9c;letter-spacing:0.6px;">dbt_analytics_core_job</span>
<span class="t" style="left:2182px;top:1613px;font-size:21.6px;color:#2a2d9c;letter-spacing:0.463px;">At 03:00 AM UTC</span>
<span class="t" style="left:2138px;top:607px;font-size:25.2px;color:#2a2d9c;letter-spacing:0.773px;">dagster_open_platform</span>
<span class="t" style="left:2138px;top:971px;font-size:25.2px;color:#0b0e1f;letter-spacing:0.607px;">purina.staging_cloud_product.stg_cloud_product__users</span>
<span class="t" style="left:2181.5px;top:1238px;font-size:25.2px;color:#2a2d9c;letter-spacing:0.435px;">Open stg_cloud_product__users.sql in GitHub</span>
<span class="t" style="left:2181.5px;top:1281px;font-size:25.2px;color:#2a2d9c;letter-spacing:0.174px;">Open assets.py in GitHub</span>
</aside>
</div>
<script>(function(){function fit(){var w=window.innerWidth||0,b=document.body,p=document.getElementById("page");if(w>100&&Math.abs(w-2992)>2){var s=w/2992;p.style.zoom=s;b.style.width=w+"px";b.style.height=Math.round(1678*s)+"px";}else{p.style.zoom="";b.style.width="";b.style.height="";}}fit();window.addEventListener("resize",fit);})();</script>
</body></html>
